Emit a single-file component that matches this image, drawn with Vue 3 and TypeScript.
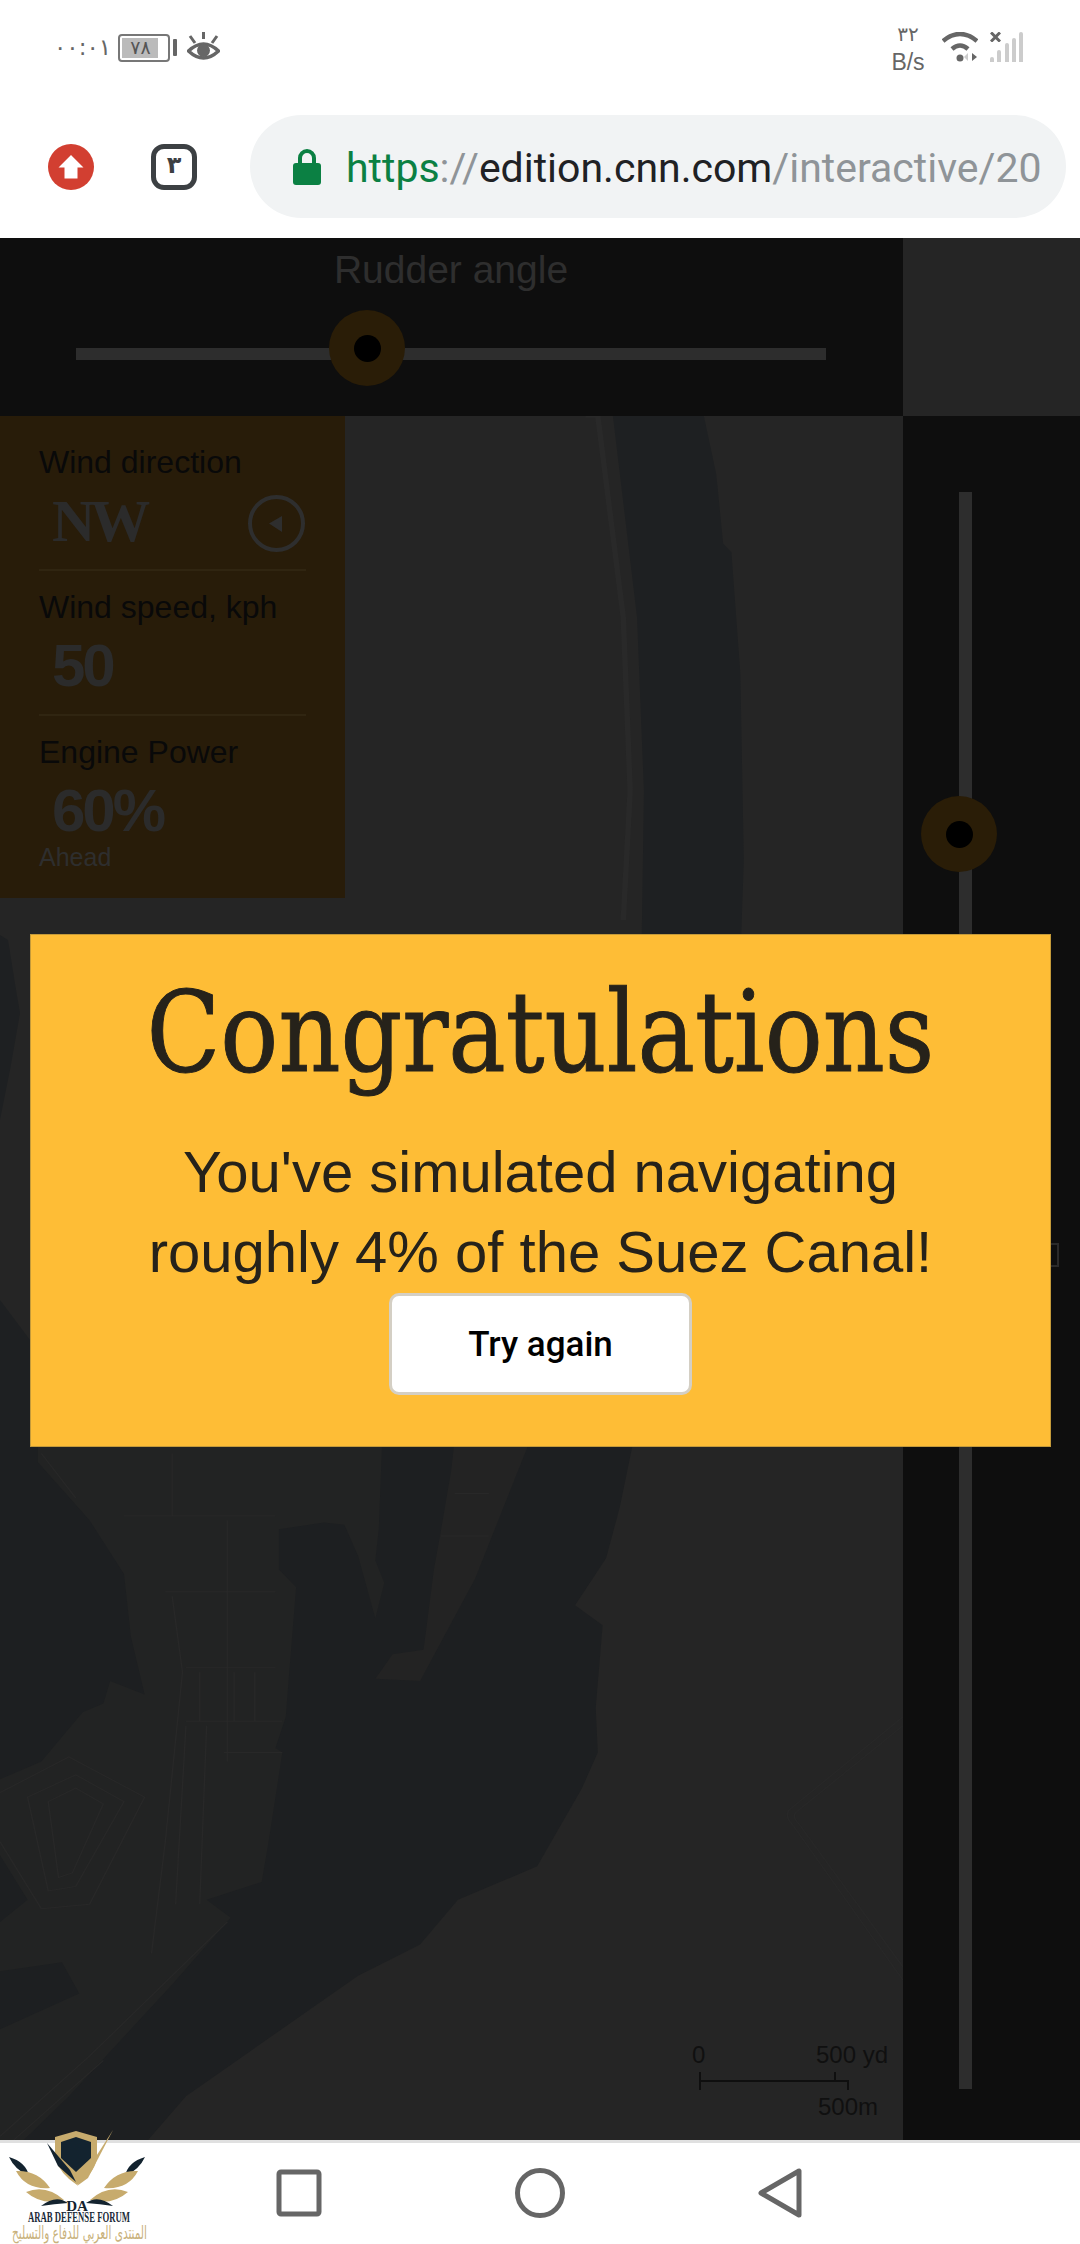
<script setup lang="ts">
const signalBars = [15, 35, 58, 73, 88]

const readouts = [
  { label: 'Wind direction', value: 'NW', slab: true, compass: true },
  { label: 'Wind speed, kph', value: '50', slab: false, compass: false },
  { label: 'Engine Power', value: '60%', slab: false, compass: false, note: 'Ahead' }
]
</script>

<template>
  <div class="page">
    <header class="chrome">
      <div class="status">
        <div class="status-left">
          <span class="clock">٠٠:٠١</span>
          <div class="battery">
            <div class="battery-body">
              <span class="battery-level">٧٨</span>
            </div>
            <div class="battery-nub"></div>
          </div>
          <svg class="eye" viewBox="0 0 33 30">
            <path d="M1.500 19 Q16.500 5 31.500 19 Q16.500 33 1.500 19Z" fill="none" stroke="#666" stroke-width="3.500" />
            <circle cx="16.500" cy="18.500" r="6.500" fill="#666" />
            <path d="M16.500 0V7M3 4l5 7M30 4l-5 7" stroke="#666" stroke-width="3" fill="none" />
          </svg>
        </div>
        <div class="status-right">
          <div class="speed">
            <span class="speed-num">٣٢</span>
            <span>B/s</span>
          </div>
          <svg class="wifi" viewBox="0 0 36 30">
            <path d="M1 9 Q18 -5 35 9" fill="none" stroke="#666" stroke-width="4.500" />
            <path d="M10 17 Q18 10 26 17" fill="none" stroke="#666" stroke-width="4.500" />
            <circle cx="18" cy="26" r="3.500" fill="#666" />
            <path d="M26 21v8l-4-4z" fill="#ccc" />
            <path d="M30 21v8l5-4z" fill="#666" />
          </svg>
          <div class="signal">
            <svg class="signal-x" viewBox="0 0 11 10">
              <path d="M1 0.500 L10 9.500 M10 0.500 L1 9.500" stroke="#666" stroke-width="3" />
            </svg>
            <div class="bars">
              <span v-for="(h, i) in signalBars" :key="i" class="bar" :class="'bar-' + i"></span>
            </div>
          </div>
        </div>
      </div>
      <div class="toolbar">
        <svg class="update" viewBox="0 0 46 46">
          <circle cx="23" cy="23" r="23" fill="#d23f31" />
          <path d="M23 11 L35.500 23.500 H29.500 V34.500 H16.500 V23.500 H10.500Z" fill="#fff" />
        </svg>
        <div class="tabs">٣</div>
        <div class="url-bar">
          <svg class="lock" viewBox="0 0 28 36">
            <path d="M7 16V9a7 7 0 0 1 14 0v7" fill="none" stroke="#0b8043" stroke-width="4" />
            <rect y="14" width="28" height="22" rx="3" fill="#0b8043" />
          </svg>
          <div class="url"><span class="scheme">https</span><span class="dim">://</span><span class="host">edition.cnn.com</span><span class="dim">/interactive/20</span></div>
        </div>
      </div>
    </header>

    <main class="stage">
      <svg class="map" viewBox="0 238 903 1902" preserveAspectRatio="none">
        <rect x="0" y="238" width="903" height="1902" fill="#252525" />
        <g transform="translate(0 240) scale(.6887 .4337)">
          <path d="M890 406H1022L1040 540L1050 700L1062 720L1075 1000L1080 1430L1072 1800H930L935 1270L925 870Z" fill="#1e2022" />
          <path d="M850 406L868 406L905 870L915 1270L905 1568" fill="none" stroke="#292929" stroke-width="8" />
        </g>
        <path d="M0 935L8 940L16 990L20 1013L10 1070L0 1120Z" fill="#1e2022" />
        <path d="M0 1300L30 1340V1450H0Z" fill="#1e2022" />
        <g transform="translate(0 1440) scale(.6887 .4464)">
          <path d="M0 0H920L900 150L880 265L835 370L875 415L865 600L868 700L845 780L780 955L665 1030L610 1130L520 1200L270 1470L215 1568V1850H0Z" fill="#1d1f21" />
          <path d="M660 0H770L690 310L610 540L545 535L570 480L615 470L630 290L640 205L655 70Z" fill="#232323" />
          <path d="M55 0H555L550 200L545 270L558 320L545 400L520 260L500 190L470 185L405 200L405 290L430 330L420 520L415 620L400 690L410 700L390 900L380 990L300 1030L335 1070L250 1220L100 1470L0 1620V1320L115 1240L90 1170L0 1190V1080L40 1030L0 930V760L60 720L120 610L150 590L160 540L210 570L190 440L180 300L130 180L55 50Z" fill="#222323" />
          <g fill="none" stroke="#282828" stroke-width="2">
            <path d="M180 170H400M240 340H400M330 180V720M270 510H400M270 630H410M325 700H410M290 520V630M340 520V630M370 520V630" />
            <path d="M250 350L265 520L240 900L220 1150M300 640L290 1040M270 640L255 1040" />
            <path d="M0 790L100 710L210 800L130 1040L60 1050L0 900M40 800L110 750L180 810L110 1000L70 1010ZM70 810L110 780L150 815L105 970L85 980Z" />
            <path d="M0 1560L130 1380L330 1080M20 1568L150 1390" />
            <path d="M1311 620L1145 830Q1140 845 1150 860L1311 1210M1311 640L1155 835Q1150 845 1160 860L1311 1180" />
            <path d="M60 30L110 130M250 30V170M660 120H710M640 215H710" />
          </g>
        </g>
      </svg>

      <section class="rudder">
        <div class="rudder-title">Rudder angle</div>
        <div class="rudder-track">
          <div class="knob rudder-knob"><span class="knob-dot"></span></div>
        </div>
      </section>
      <div class="corner"></div>

      <div class="map-cell">
        <aside class="readouts">
          <div v-for="r in readouts" :key="r.label" class="readout">
            <div class="readout-label">{{ r.label }}</div>
            <div class="readout-row">
              <span class="readout-value" :class="{ slab: r.slab }">{{ r.value }}</span>
              <svg v-if="r.compass" class="compass" viewBox="0 0 57 57">
                <circle cx="28.500" cy="28.500" r="26.500" fill="none" stroke="#2e2e2e" stroke-width="4" />
                <path d="M21 28.500L34 21V37Z" fill="#2e2e2e" />
              </svg>
            </div>
            <div v-if="r.note" class="readout-note">{{ r.note }}</div>
          </div>
        </aside>

        <div class="scale">
          <div class="scale-top"><span>0</span><span>500 yd</span></div>
          <svg class="scale-rule" viewBox="0 0 150 18">
            <path d="M1 0V18M1 9H149V18M136 0V9" fill="none" stroke="#0f0f0f" stroke-width="2" />
          </svg>
          <div class="scale-bottom">500m</div>
        </div>
      </div>

      <section class="throttle">
        <div class="throttle-track">
          <div class="knob throttle-knob"><span class="knob-dot"></span></div>
        </div>
      </section>

      <div class="ship-edge"></div>

      <div class="dialog">
        <h1 class="dialog-title">Congratulations</h1>
        <p class="dialog-text">You've simulated navigating<br />roughly 4% of the Suez Canal!</p>
        <button class="retry">Try again</button>
      </div>
    </main>

    <nav class="navbar">
      <svg class="nav-icon" viewBox="0 0 46 50"><rect x="3" y="4" width="40" height="42" rx="2" fill="none" stroke="#666" stroke-width="5" /></svg>
      <svg class="nav-icon" viewBox="0 0 50 50"><circle cx="25" cy="25" r="22.500" fill="none" stroke="#666" stroke-width="5" /></svg>
      <svg class="nav-icon" viewBox="0 0 44 50"><path d="M41 3V47L3 25Z" fill="none" stroke="#666" stroke-width="5" stroke-linejoin="round" /></svg>
    </nav>

    <svg class="watermark" viewBox="0 0 180 124">
      <path d="M55 17L76 11L97 17V38Q94 54 77 65Q60 54 55 38Z" fill="#c7ab6d" />
      <path d="M61 22L76 17L91 22V38L76 52L61 38Z" fill="#13232f" />
      <path d="M77 66L113 10L88 58Z" fill="#c7ab6d" />
      <path d="M47 23L70 50L76 62L58 46Z" fill="#13232f" />
      <path d="M9 37Q26 42 29 56Q15 50 9 37ZM145 37Q128 42 125 56Q139 50 145 37Z" fill="#13232f" />
      <path d="M16 51Q38 50 50 68Q26 70 16 51ZM138 51Q116 50 104 68Q128 70 138 51ZM26 72Q46 64 64 80Q42 86 26 72ZM128 72Q108 64 90 80Q112 86 128 72Z" fill="#c7ab6d" />
      <path d="M41 86Q56 74 68 83Q54 84 41 86ZM113 86Q98 74 86 83Q100 84 113 86Z" fill="#13232f" />
      <text x="77" y="91" class="wm-mark" text-anchor="middle">DA</text>
      <text x="28" y="102" class="wm-name" textLength="102" lengthAdjust="spacingAndGlyphs">ARAB DEFENSE FORUM</text>
      <text x="12" y="119" class="wm-arabic" textLength="135" lengthAdjust="spacingAndGlyphs">المنتدى العربي للدفاع والتسليح</text>
    </svg>
  </div>
</template>

<style scoped>
.page {
  position: relative;
  width: 1080px;
  height: 2244px;
  display: flex;
  flex-direction: column;
  overflow: hidden;
  background: #fff;
  font-family: "Liberation Sans", Arial, sans-serif;
}

.chrome {
  height: 238px;
  display: flex;
  flex-direction: column;
  flex: none;
}

.status {
  height: 115px;
  display: flex;
  justify-content: space-between;
  padding: 25px 0 0 54px;
  box-sizing: border-box;
  color: #666;
}

.status-left {
  display: flex;
  align-items: flex-start;
  height: 38px;
  padding-top: 7px;
}

.clock {
  width: 48px;
  margin-right: 16px;
  font: 23px/30px "DejaVu Sans", sans-serif;
  direction: ltr;
  unicode-bidi: bidi-override;
  white-space: nowrap;
}

.battery {
  display: flex;
  align-items: center;
  height: 29px;
  margin-top: 1px;
}

.battery-body {
  width: 52px;
  height: 28px;
  box-sizing: border-box;
  border: 2px solid #777;
  border-radius: 4px;
  padding: 2px;
}

.battery-level {
  display: block;
  width: 35px;
  height: 20px;
  background: #bbb;
  font: 19px/18px "DejaVu Sans", sans-serif;
  text-align: center;
  color: #555;
  padding-left: 1px;
}

.battery-nub {
  width: 4px;
  height: 17px;
  margin-left: 3px;
  background: #666;
  border-radius: 1px;
}

.eye {
  width: 33px;
  height: 30px;
  margin-left: 10px;
}

.status-right {
  display: flex;
  align-items: flex-start;
  padding-right: 57px;
}

.speed {
  width: 34px;
  margin-top: -3px;
  display: flex;
  flex-direction: column;
  align-items: center;
  font-size: 23px;
  line-height: 25px;
  white-space: nowrap;
  position: relative;
  left: -3px;
}

.speed-num {
  font: 20px/25px "DejaVu Sans", sans-serif;
  margin-bottom: 3px;
}

.wifi {
  width: 36px;
  height: 30px;
  margin: 7px 0 0 14px;
}

.signal {
  position: relative;
  width: 34px;
  height: 30px;
  margin: 7px 0 0 11px;
}

.signal-x {
  position: absolute;
  left: 1px;
  top: 0;
  width: 11px;
  height: 10px;
}

.bars {
  height: 30px;
  display: flex;
  align-items: flex-end;
  justify-content: space-between;
  padding-left: 1px;
}

.bar {
  width: 4px;
  background: #ccc;
  border-radius: 2px 2px 0 0;
}

.bar-0 { height: 5px; }
.bar-1 { height: 12px; }
.bar-2 { height: 19px; }
.bar-3 { height: 24px; }
.bar-4 { height: 30px; }

.toolbar {
  display: flex;
  align-items: center;
  height: 103px;
  padding-left: 48px;
}

.update {
  width: 46px;
  height: 46px;
  flex: none;
}

.tabs {
  width: 46px;
  height: 46px;
  margin-left: 57px;
  box-sizing: border-box;
  border: 5px solid #3c4043;
  border-radius: 13px;
  font: bold 24px/32px "DejaVu Sans", sans-serif;
  color: #3c4043;
  text-align: center;
  flex: none;
}

.url-bar {
  width: 816px;
  height: 103px;
  margin-left: 53px;
  border-radius: 52px;
  background: #f1f3f4;
  display: flex;
  align-items: center;
  padding-left: 43px;
  box-sizing: border-box;
  overflow: hidden;
  flex: none;
}

.lock {
  width: 28px;
  height: 36px;
  flex: none;
}

.url {
  margin-left: 25px;
  font: 41px/50px Roboto, sans-serif;
  white-space: nowrap;
  position: relative;
  top: 1px;
}

.scheme { color: #0b8043; }
.dim { color: #8f9498; }
.host { color: #202124; }

.stage {
  position: relative;
  flex: 1;
  display: grid;
  grid-template-columns: 903px 177px;
  grid-template-rows: 178px 1fr;
  background: #252525;
  overflow: hidden;
}

.map {
  position: absolute;
  left: 0;
  top: 0;
  width: 903px;
  height: 1902px;
}

.rudder {
  position: relative;
  background: #0e0e0e;
  padding: 10px 77px 0 76px;
  display: flex;
  flex-direction: column;
  align-items: center;
}

.rudder-title {
  font-size: 39px;
  line-height: 44px;
  color: #2e2e2e;
}

.rudder-track {
  position: relative;
  align-self: stretch;
  height: 12px;
  margin-top: 56px;
  background: #2d2d2d;
}

.knob {
  position: absolute;
  width: 76px;
  height: 76px;
  border-radius: 50%;
  background: #2a1d07;
  display: flex;
  align-items: center;
  justify-content: center;
}

.knob-dot {
  width: 27px;
  height: 27px;
  border-radius: 50%;
  background: #000;
}

.rudder-knob {
  left: 253px;
  top: -38px;
}

.corner {
  position: relative;
  background: transparent;
}

.map-cell {
  position: relative;
  min-height: 0;
}

.readouts {
  width: 345px;
  box-sizing: border-box;
  padding: 10px 39px 26px;
  background: #281c09;
}

.readout {
  padding-top: 14px;
}

.readout + .readout {
  border-top: 2px solid #302511;
  margin-top: 18px;
}

.readout-label {
  font-size: 32px;
  line-height: 44px;
  color: #090909;
  white-space: nowrap;
}

.readout-row {
  height: 60px;
  margin-top: 7px;
  padding-left: 13px;
  display: flex;
  align-items: center;
  justify-content: space-between;
}

.readout-value {
  font: bold 60px/60px "Liberation Sans", sans-serif;
  color: #2b2b2b;
  letter-spacing: -3px;
}

.readout-value.slab {
  font: bold 60px/60px "Liberation Serif", serif;
  letter-spacing: -5px;
}

.compass {
  width: 57px;
  height: 57px;
  margin-right: 1px;
  position: relative;
  top: 2px;
}

.readout-note {
  font-size: 25px;
  line-height: 30px;
  margin-top: 1px;
  color: #2e2e2e;
}

.scale {
  position: absolute;
  left: 692px;
  top: 1625px;
  width: 196px;
  color: #101010;
  font-size: 24px;
}

.scale-top {
  display: flex;
  justify-content: space-between;
  line-height: 28px;
}

.scale-rule {
  display: block;
  width: 150px;
  height: 18px;
  margin: 3px 0 0 7px;
}

.scale-bottom {
  line-height: 28px;
  margin: 3px 0 0 126px;
}

.throttle {
  position: relative;
  background: #0e0e0e;
  padding: 76px 0 51px 56px;
}

.throttle-track {
  position: relative;
  width: 13px;
  height: 100%;
  background: #2d2d2d;
}

.throttle-knob {
  left: -38px;
  top: 304px;
}

.ship-edge {
  position: absolute;
  left: 1051px;
  top: 1005px;
  width: 6px;
  height: 20px;
  border: 2px solid #2a2a2a;
  border-left: none;
}

.dialog {
  position: absolute;
  left: 30px;
  top: 696px;
  width: 1021px;
  height: 513px;
  background: #febd36;
  box-shadow: inset 0 0 0 1px #c49a3a;
  display: flex;
  flex-direction: column;
  align-items: center;
  color: #26221a;
}

.dialog-title {
  margin: 28px 0 0;
  font: 400 112px/140px "DejaVu Serif", serif;
  white-space: nowrap;
  -webkit-text-stroke: 1px #26221a;
  transform: scaleX(.861);
}

.dialog-text {
  margin: 30px 0 0;
  font-size: 58px;
  line-height: 80px;
  text-align: center;
}

.retry {
  width: 303px;
  height: 102px;
  margin-top: 1px;
  flex: none;
  background: #fff;
  border: 3px solid #d4cfc4;
  border-radius: 10px;
  color: #000;
  font: 500 35px Roboto, sans-serif;
  padding: 0;
}

.navbar {
  height: 104px;
  flex: none;
  box-sizing: border-box;
  border-top: 3px solid #e0e0e0;
  background: #fff;
  display: flex;
  align-items: center;
  padding: 0 0 1px 276px;
  gap: 193px;
}

.nav-icon {
  height: 50px;
  flex: none;
}

.watermark {
  position: absolute;
  left: 0;
  top: 2120px;
  width: 180px;
  height: 124px;
  overflow: visible;
}

.wm-mark {
  font: bold 15px "Liberation Serif", serif;
  fill: #13232f;
}

.wm-name {
  font: bold 14px "Liberation Serif", serif;
  fill: #1b2a38;
}

.wm-arabic {
  font: 18px "DejaVu Sans", sans-serif;
  fill: #c9b27c;
}
</style>
